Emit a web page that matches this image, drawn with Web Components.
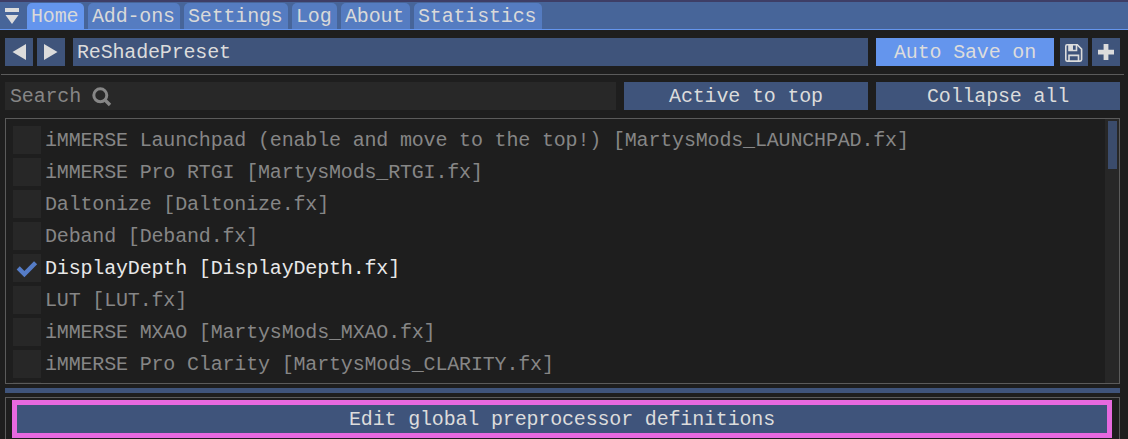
<!DOCTYPE html>
<html lang="en"><head><meta charset="utf-8"><title>ReShade</title>
<style>html,body{margin:0;background:#1e1e1e;overflow:hidden}</style></head><body>
<reshade-overlay></reshade-overlay>
<script>
const define = (name, html) => {
  const t = document.createElement('template');
  t.innerHTML = '<style>*{box-sizing:border-box}svg{display:block;flex:none}</style>' + html;
  customElements.define(name, class extends HTMLElement {
    constructor() {
      super();
      this.attachShadow({mode: 'open'}).append(t.content.cloneNode(true));
    }
  });
};

define('menu-tab', `<style>
:host{display:block;box-sizing:border-box;height:26px;padding-left:4px;line-height:28px;border-radius:5px 5px 0 0;background:#557cc1;color:#d9d9d9}
:host([active]){background:#6495ed}
</style><slot></slot>`);

define('tab-bar', `<style>
:host{display:flex;flex:none;box-sizing:border-box;height:30px;padding:1px 0 0 5px;gap:4px;background:#476599;border-top:2px solid #3e3e66;border-bottom:1px solid #6495ed}
svg{width:18px;height:26px}
</style><svg viewBox="0 0 18 26"><path d="M0 5h14v4H0zM.5 12h13L7 21z" fill="#dcdcdc"/></svg><slot></slot>`);

define('ui-button', `<style>
:host{display:flex;align-items:center;justify-content:center;height:28px;background:#3f547b;color:#dcdcdc;line-height:28px;box-sizing:border-box;padding-top:2px}
:host([on]){background:#6495ed}
:host([field]){justify-content:flex-start;padding-left:4px}
:host([icon]){width:28px;padding:0}
</style><slot></slot>`);

define('search-box', `<style>
:host{display:flex;align-items:center;gap:11px;box-sizing:border-box;height:28px;padding:2px 0 0 5px;background:#282828;color:#868686;line-height:28px}
svg{width:20px;height:20px}
</style><slot></slot><svg viewBox="0 0 20 20" fill="none" stroke="#868686"><circle cx="8.3" cy="8.3" r="6.5" stroke-width="3"/><path d="M13 13l5 5" stroke-width="3.4"/></svg>`);

define('effect-row', `<style>
:host{display:flex;gap:4px;height:28px;color:#868686;line-height:30px;flex:none}
:host([checked]){color:#e8e8e8}
i{width:28px;height:28px;background:#272727;flex:none}
svg{display:none;width:28px;height:28px}
:host([checked]) svg{display:block}
</style><i><svg viewBox="0 0 28 28"><path d="M5.2 13.9l6.2 6.2L22.6 8.8" fill="none" stroke="#557cc6" stroke-width="4.4"/></svg></i><slot></slot>`);

define('effect-list', `<style>
:host{display:flex;justify-content:space-between;box-sizing:border-box;height:266px;border:1px solid #5b5b5b;overflow:hidden}
.rows{display:flex;flex-direction:column;gap:4px;padding:7px 0 0 7px}
.track{width:14px;background:#272727;padding:2px 2px 0 3px}
.thumb{height:48px;background:#3b4c6c}
</style><div class="rows"><slot></slot></div><div class="track"><div class="thumb"></div></div>`);

define('definitions-panel', `<style>
:host{display:block;box-sizing:border-box;height:60px;border:1px solid #5b5b5b;padding:2px 7px 0 6px}
.mark{border:5px solid #e769df;height:38px}
</style><div class="mark"><slot></slot></div>`);

define('reshade-overlay', `<style>
:host{display:flex;flex-direction:column;width:1128px;height:439px;overflow:hidden;background:#1e1e1e;font:20px "Liberation Mono",monospace;letter-spacing:-.17px;white-space:pre}
.preset{display:grid;flex:none;grid-template-columns:28px 28px 799px 182px 30px 28px;column-gap:4px;padding:8px 0 8px 5px}
.name,.auto{margin-left:4px}
.save{margin-left:2px}
hr{flex:none;margin:0 4px 0 1px;border:0;height:1px;background:#5b5b5b}
.tools{display:grid;flex:none;grid-template-columns:611px 244px 244px;gap:8px;padding:7px 0 8px 5px}
effect-list,definitions-panel{margin:0 8px 0 5px;flex:none}
.split{height:5px;flex:none;margin:4px 8px 4px 5px;background:#3f547b}
</style>
<tab-bar><menu-tab active style="width:57px">Home</menu-tab><menu-tab style="width:92px">Add-ons</menu-tab><menu-tab style="width:104px">Settings</menu-tab><menu-tab style="width:45px">Log</menu-tab><menu-tab style="width:69px">About</menu-tab><menu-tab style="width:128px">Statistics</menu-tab></tab-bar>
<div class="preset"><ui-button icon><svg width="28" height="28"><path d="M21 6v16L7.5 14z" fill="#dcdcdc"/></svg></ui-button><ui-button icon><svg width="28" height="28"><path d="M7 6v16L20.5 14z" fill="#dcdcdc"/></svg></ui-button><ui-button field class="name">ReShadePreset</ui-button><ui-button on class="auto">Auto Save on</ui-button><ui-button icon class="save"><svg width="28" height="28" fill="none" stroke="#dcdcdc" stroke-width="1.6"><path d="M7 6.8h10.3l4.3 4.3v10.4q0 1.6-1.6 1.6H7q-1.2 0-1.2-1.6V8.2q0-1.4 1.2-1.4z"/><path d="M9 7v5.5h7.5V7M9 23v-5.6h9.5V23"/><path d="M9 7h4v5H9z" fill="#dcdcdc" stroke="none"/></svg></ui-button><ui-button icon><svg width="28" height="28"><path d="M11.6 6h4.8v5.8H22v4.8h-5.6V22h-4.8v-5.4H6v-4.8h5.6z" fill="#dcdcdc"/></svg></ui-button></div>
<hr>
<div class="tools"><search-box>Search</search-box><ui-button>Active to top</ui-button><ui-button>Collapse all</ui-button></div>
<effect-list><effect-row>iMMERSE Launchpad (enable and move to the top!) [MartysMods_LAUNCHPAD.fx]</effect-row><effect-row>iMMERSE Pro RTGI [MartysMods_RTGI.fx]</effect-row><effect-row>Daltonize [Daltonize.fx]</effect-row><effect-row>Deband [Deband.fx]</effect-row><effect-row checked>DisplayDepth [DisplayDepth.fx]</effect-row><effect-row>LUT [LUT.fx]</effect-row><effect-row>iMMERSE MXAO [MartysMods_MXAO.fx]</effect-row><effect-row>iMMERSE Pro Clarity [MartysMods_CLARITY.fx]</effect-row><effect-row></effect-row></effect-list>
<div class="split"></div>
<definitions-panel><ui-button>Edit global preprocessor definitions</ui-button></definitions-panel>`);
</script></body></html>
